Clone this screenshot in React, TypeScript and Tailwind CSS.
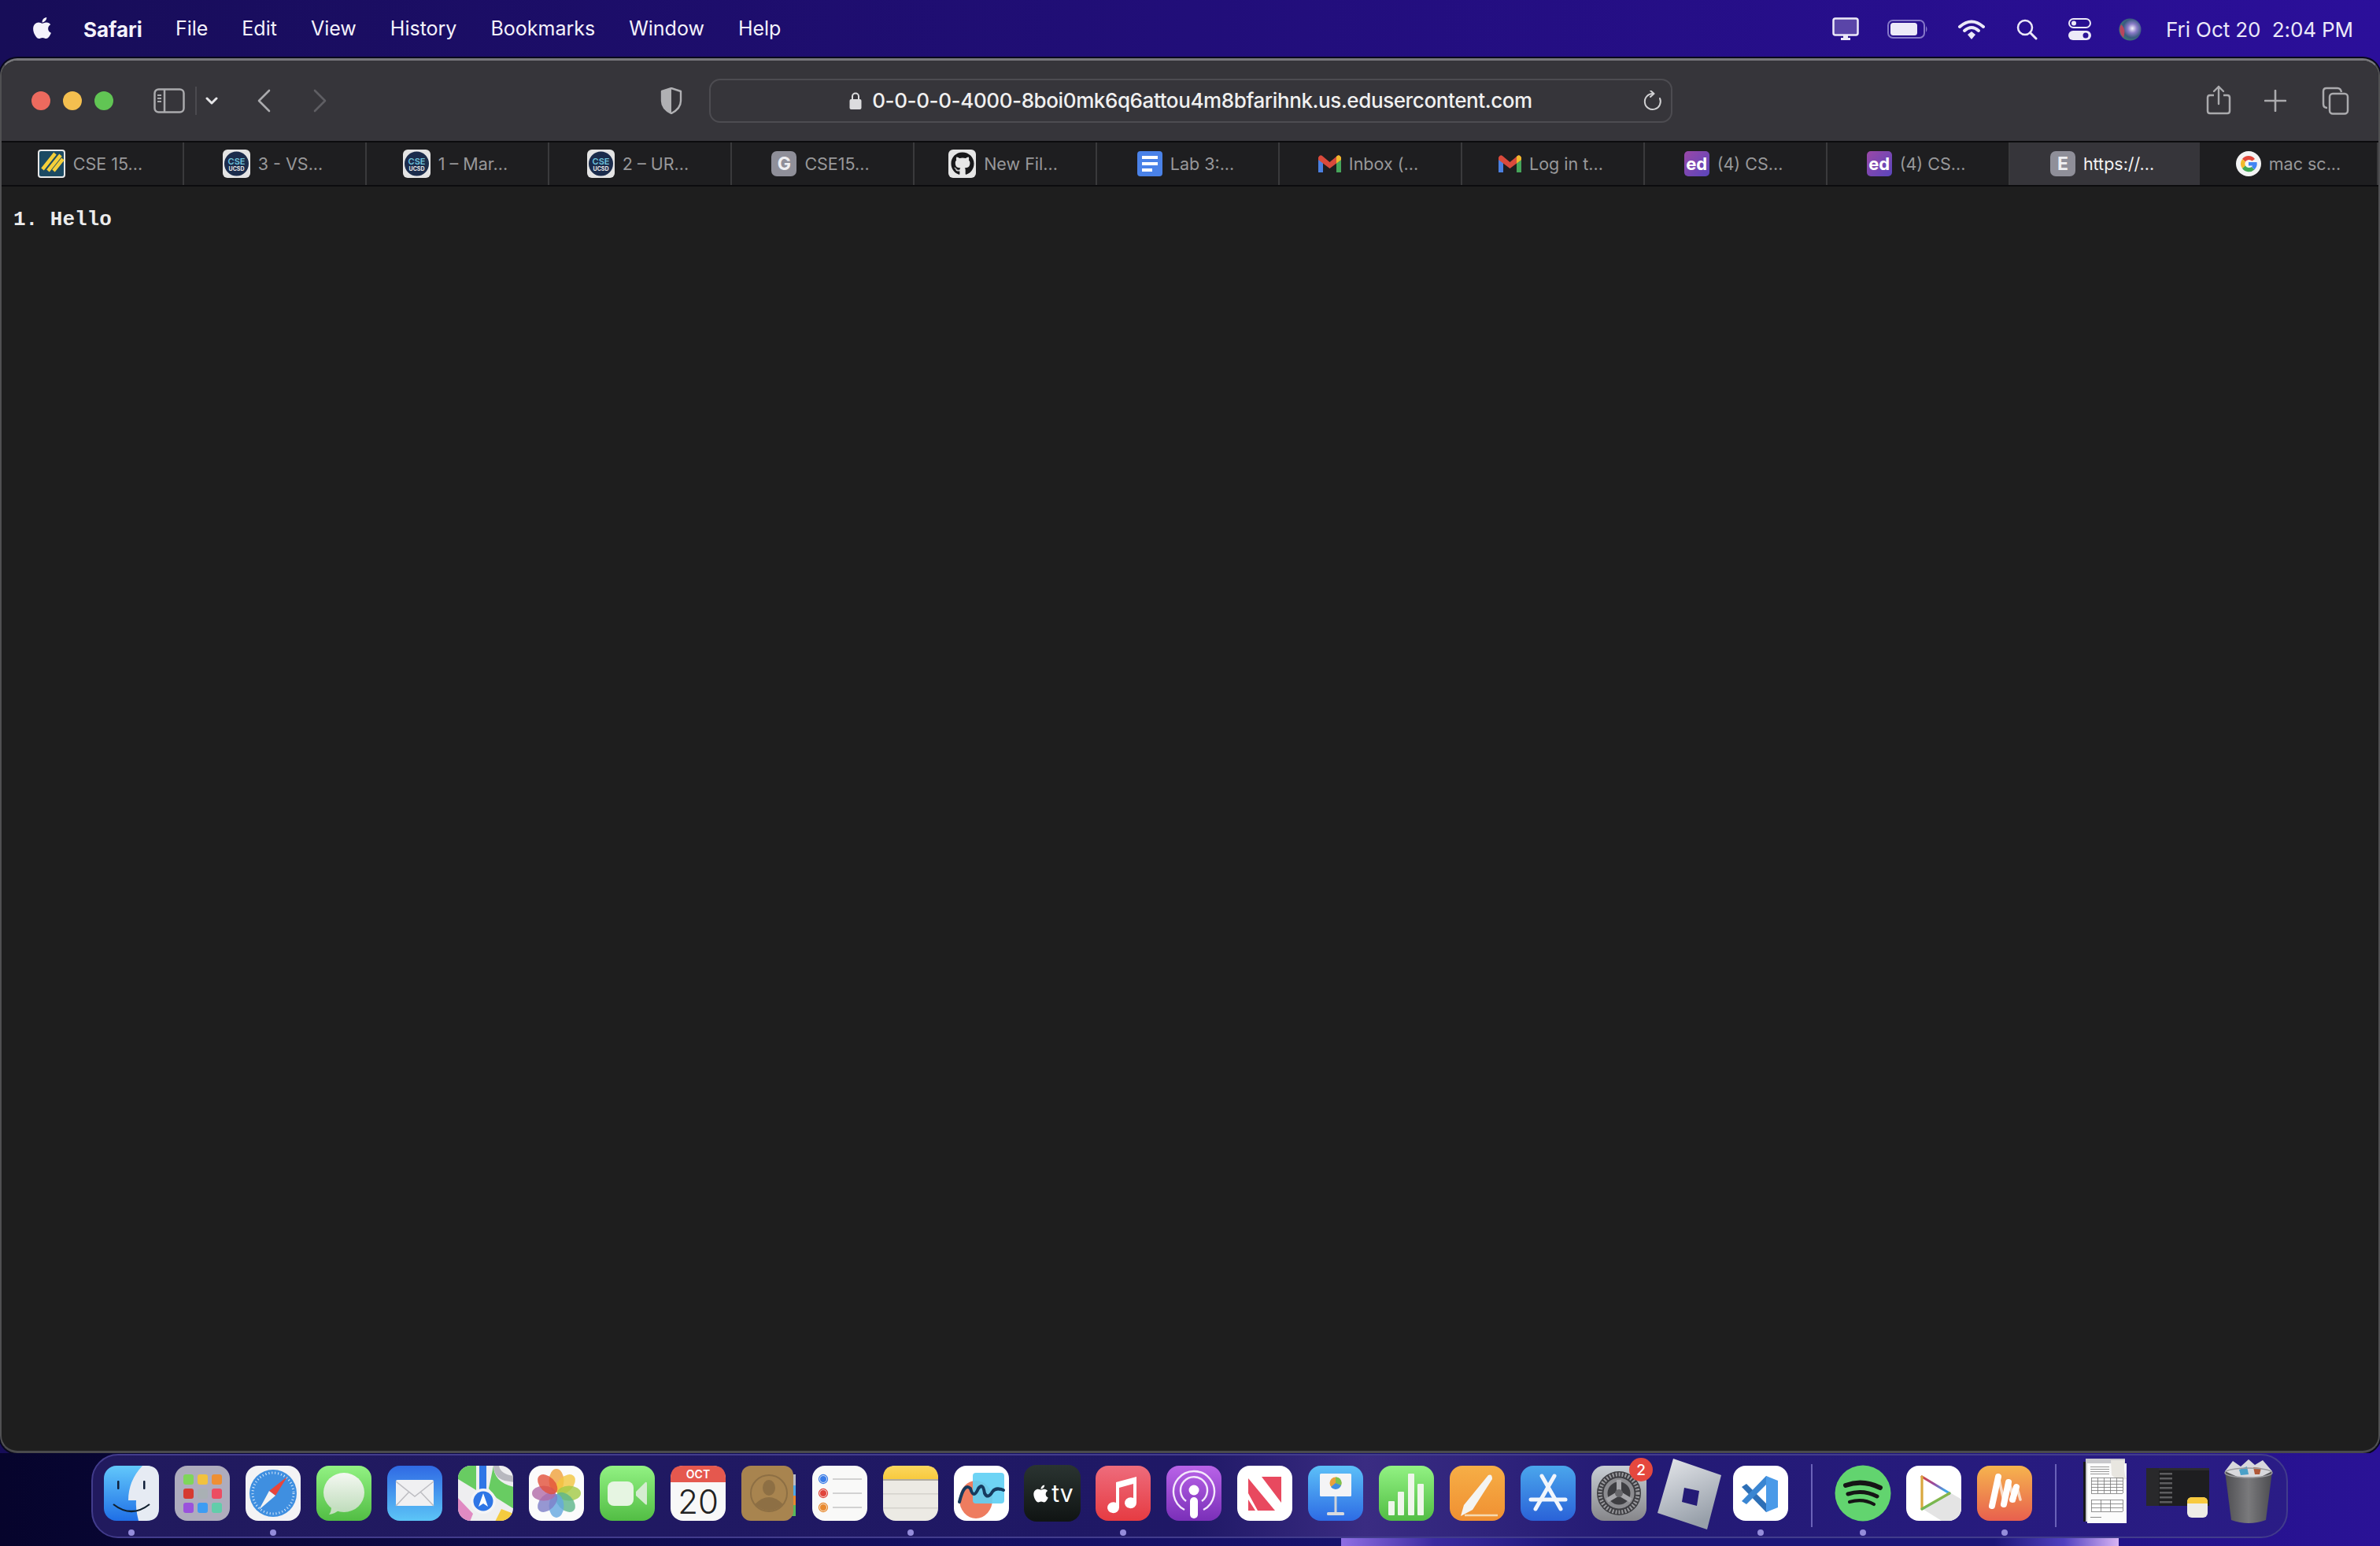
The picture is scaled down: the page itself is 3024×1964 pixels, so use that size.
import type { ReactNode } from 'react'
import { FaApple, FaGithub } from 'react-icons/fa'

const MENUS = ['File', 'Edit', 'View', 'History', 'Bookmarks', 'Window', 'Help']

const TABS: { title: string; icon: ReactNode; active?: boolean; w: string }[] = [
  { title: 'CSE 15...', icon: <GitbookFav />, w: 'w-[232px]' },
  { title: '3 - VS...', icon: <CseFav />, w: 'w-[232px]' },
  { title: '1 – Mar...', icon: <CseFav />, w: 'w-[232px]' },
  { title: '2 – UR...', icon: <CseFav />, w: 'w-[232px]' },
  { title: 'CSE15...', icon: <LetterFav letter="G" />, w: 'w-[232px]' },
  { title: 'New Fil...', icon: <GithubFav />, w: 'w-[232px]' },
  { title: 'Lab 3:...', icon: <DocsFav />, w: 'w-[232px]' },
  { title: 'Inbox (...', icon: <GmailFav />, w: 'w-[232px]' },
  { title: 'Log in t...', icon: <GmailFav />, w: 'w-[232px]' },
  { title: '(4) CS...', icon: <EdFav />, w: 'w-[232px]' },
  { title: '(4) CS...', icon: <EdFav />, w: 'w-[232px]' },
  { title: 'https://...', icon: <LetterFav letter="E" />, active: true, w: 'w-[241px]' },
  { title: 'mac sc...', icon: <GoogleFav />, w: 'flex-1' },
]

function GitbookFav() {
  return (
    <svg width="35" height="36" viewBox="0 0 35 36">
      <rect width="35" height="36" rx="4" fill="#e8e8e8" />
      <rect x="2" y="2" width="31" height="32" rx="2" fill="#1c4a63" />
      <path d="M6 25 L22 5 M13 27 L29 7 M20 27 L32 12" stroke="#f4cf3a" strokeWidth="4.5" />
    </svg>
  )
}

function CseFav() {
  return (
    <svg width="35" height="36" viewBox="0 0 35 36">
      <rect width="35" height="36" rx="6" fill="#e4e4e4" />
      <circle cx="17.5" cy="18" r="15.5" fill="#1b2c4c" />
      <text x="17.5" y="19" textAnchor="middle" fontSize="11" fontWeight="600" fill="#6fc3dc" fontFamily="Inter, sans-serif">CSE</text>
      <text x="17.5" y="27" textAnchor="middle" fontSize="7" fontWeight="700" fill="#e8e8e8" fontFamily="Inter, sans-serif">UCSD</text>
    </svg>
  )
}

function LetterFav({ letter }: { letter: string }) {
  return (
    <div className="flex h-[32px] w-[32px] items-center justify-center rounded-[7px] bg-[#8f8f99] text-[23px] font-bold leading-none text-[#efeff2]">
      {letter}
    </div>
  )
}

function GithubFav() {
  return (
    <div className="flex h-[36px] w-[35px] items-center justify-center rounded-[6px] bg-[#e6e6e6] text-[#18181a]">
      <FaGithub size={30} />
    </div>
  )
}

function DocsFav() {
  return (
    <svg width="32" height="32" viewBox="0 0 32 32">
      <rect width="32" height="32" rx="4" fill="#4a82e8" />
      <rect x="6" y="6" width="20" height="4" fill="#fff" />
      <rect x="6" y="14" width="20" height="4" fill="#fff" />
      <rect x="6" y="22" width="13" height="4" fill="#fff" />
    </svg>
  )
}

function GmailFav() {
  return (
    <svg width="29" height="22" viewBox="0 0 29 22">
      <path d="M0 3 L0 22 L6 22 L6 9 Z" fill="#4a7fe0" />
      <path d="M29 3 L29 22 L23 22 L23 9 Z" fill="#46a55a" />
      <path d="M0 3 Q2 -1 5 1 L14.5 9 L24 1 Q27 -1 29 3 L29 6 L14.5 17 L0 6 Z" fill="#d94a3c" />
      <path d="M23 2 L24 1 Q27 -1 29 3 L29 6 L23 10.5 Z" fill="#efb92c" />
    </svg>
  )
}

function EdFav() {
  return (
    <div className="flex h-[32px] w-[32px] items-center justify-center rounded-[5px] bg-[linear-gradient(135deg,#9a48a8,#5a46bc)] text-[22px] font-bold leading-none text-white">
      ed
    </div>
  )
}

function GoogleFav() {
  return (
    <svg width="32" height="32" viewBox="0 0 32 32">
      <circle cx="16" cy="16" r="16" fill="#f4f4f4" />
      <path d="M24 10 A10 10 0 0 0 8 10 L12 13.5 A5.5 5.5 0 0 1 20.5 12.5 Z" fill="#e2483b" />
      <path d="M8 10 A10.5 10.5 0 0 0 8 22 L12 18.5 A5 5 0 0 1 12 13.5 Z" fill="#f3bb2b" />
      <path d="M8 22 A10.5 10.5 0 0 0 23.5 23.5 L20 20 A5.5 5.5 0 0 1 12 18.5 Z" fill="#41a853" />
      <path d="M26.5 14 L16 14 L16 18.5 L21 18.5 Q20.5 19.5 20 20 L23.5 23.5 Q27.5 19.5 26.5 14 Z" fill="#4285f4" />
    </svg>
  )
}

function Tile({ children }: { children: ReactNode }) {
  return (
    <svg width="72" height="72" viewBox="0 0 72 72" className="block overflow-visible">
      {children}
    </svg>
  )
}

function Finder() {
  return (
    <Tile>
      <defs>
        <linearGradient id="fi" x1="0" y1="0" x2="0" y2="1"><stop offset="0" stopColor="#62c8fb" /><stop offset="1" stopColor="#1f6fe6" /></linearGradient>
      </defs>
      <rect x="1" y="1" width="70" height="70" rx="16" fill="url(#fi)" />
      <path d="M50 1 H55 Q71 1 71 17 V55 Q71 71 55 71 H45 Q41 55 42 45 H32 Q32 20 50 1 Z" fill="#e6ebf3" />
      <rect x="18" y="20" width="2.5" height="11" rx="1" fill="#10203a" />
      <rect x="51" y="20" width="2.5" height="11" rx="1" fill="#10203a" />
      <path d="M13 50 Q36 68 59 50" fill="none" stroke="#10202e" strokeWidth="2.2" />
    </Tile>
  )
}

function Launchpad() {
  const colors = ['#7fd65a', '#f2c23e', '#ee8f33', '#d63a30', '#a9b0b4', '#ec4d62', '#9a52dc', '#3d9cf2', '#62cdaa']
  return (
    <Tile>
      <rect x="1" y="1" width="70" height="70" rx="16" fill="#aeacbd" />
      {colors.map((c, i) => (
        <rect key={i} x={12 + (i % 3) * 18} y={12 + Math.floor(i / 3) * 18} width="13" height="13" rx="3" fill={c} />
      ))}
    </Tile>
  )
}

function SafariIcon() {
  return (
    <Tile>
      <rect x="1" y="1" width="70" height="70" rx="16" fill="#f3f3f5" />
      <circle cx="36" cy="36" r="30" fill="#3f8fe0" />
      <circle cx="36" cy="36" r="26" fill="none" stroke="#dcebfa" strokeWidth="3" strokeDasharray="1 3" />
      <path d="M54 15 L31 33 L39 39 Z" fill="#e8453c" />
      <path d="M18 57 L31 33 L39 39 Z" fill="#f4f4f4" />
    </Tile>
  )
}

function Messages() {
  return (
    <Tile>
      <defs>
        <linearGradient id="gr" x1="0" y1="0" x2="0" y2="1"><stop offset="0" stopColor="#92f283" /><stop offset="1" stopColor="#52bd44" /></linearGradient>
        <linearGradient id="bub" x1="0" y1="0" x2="0" y2="1"><stop offset="0" stopColor="#f4f8f2" /><stop offset="1" stopColor="#bfdcbb" /></linearGradient>
      </defs>
      <rect x="1" y="1" width="70" height="70" rx="16" fill="url(#gr)" />
      <ellipse cx="36" cy="35" rx="26" ry="25" fill="url(#bub)" />
      <path d="M20 52 Q20 60 17 63 Q25 62 30 57 Z" fill="#c5e0c0" />
    </Tile>
  )
}

function Mail() {
  return (
    <Tile>
      <defs>
        <linearGradient id="ml" x1="0" y1="0" x2="0" y2="1"><stop offset="0" stopColor="#2f69e4" /><stop offset="1" stopColor="#5cc5f7" /></linearGradient>
      </defs>
      <rect x="1" y="1" width="70" height="70" rx="16" fill="url(#ml)" />
      <rect x="12" y="19" width="48" height="33" rx="2" fill="#f0f0f2" />
      <path d="M12 21 L36 40 L60 21 M12 52 L29 34 M60 52 L43 34" fill="none" stroke="#bdbdc2" strokeWidth="1.5" />
    </Tile>
  )
}

function Maps() {
  return (
    <Tile>
      <clipPath id="mp"><rect x="1" y="1" width="70" height="70" rx="16" /></clipPath>
      <g clipPath="url(#mp)">
        <rect width="72" height="72" fill="#eeeef0" />
        <path d="M1 1 H24 V32 L1 18 Z" fill="#68cc62" />
        <path d="M46 1 Q46 22 72 28 V56 L50 42 L40 30 Z" fill="#68cc62" />
        <path d="M1 42 L20 62 L16 72 H1 Z" fill="#e08ac2" />
        <path d="M48 72 L56 56 L72 62 V72 Z" fill="#f4cb3f" />
        <rect x="28" y="0" width="9" height="36" fill="#2f76e6" />
        <path d="M46 0 Q46 16 60 20 L72 22 V14 Q54 12 53 0 Z" fill="#b8b8bf" />
      </g>
      <circle cx="33" cy="46" r="16" fill="#f4f4f6" />
      <circle cx="33" cy="46" r="12.5" fill="#2f76e6" />
      <path d="M33 36 L39 53 L33 49 L27 53 Z" fill="#fff" />
    </Tile>
  )
}

function Photos() {
  const petals = ['#f0a13c', '#f2c53e', '#a3c945', '#5cb58a', '#64a8e0', '#7d7ec8', '#b16aa8', '#e2503a']
  return (
    <Tile>
      <rect x="1" y="1" width="70" height="70" rx="16" fill="#fbfbfb" />
      {petals.map((c, i) => (
        <ellipse key={i} cx="36" cy="20" rx="9.5" ry="15" fill={c} opacity="0.8" transform={`rotate(${i * 45} 36 36)`} />
      ))}
    </Tile>
  )
}

function FaceTime() {
  return (
    <Tile>
      <rect x="1" y="1" width="70" height="70" rx="16" fill="url(#gr)" />
      <rect x="11" y="21" width="33" height="31" rx="8" fill="#e6f5e2" />
      <path d="M47 34 L59 22 Q61 21 61 24 V49 Q61 52 59 50 L47 39 Z" fill="#d4ecd0" />
    </Tile>
  )
}

function Calendar() {
  return (
    <Tile>
      <rect x="1" y="1" width="70" height="70" rx="16" fill="#f8f8f8" />
      <path d="M1 22 V17 Q1 1 17 1 H55 Q71 1 71 17 V22 Z" fill="#e5584e" />
      <text x="36" y="17" textAnchor="middle" fontSize="14" fontWeight="600" fill="#fff" fontFamily="Inter, sans-serif">OCT</text>
      <text x="36" y="62" textAnchor="middle" fontSize="42" fontWeight="300" fill="#222" fontFamily="Inter, sans-serif">20</text>
    </Tile>
  )
}

function Contacts() {
  return (
    <Tile>
      <rect x="60" y="12" width="10" height="14" fill="#bdbdc4" />
      <rect x="60" y="26" width="10" height="13" fill="#4fa8e8" />
      <rect x="60" y="39" width="10" height="12" fill="#e8892e" />
      <rect x="60" y="51" width="10" height="14" fill="#58b85a" />
      <rect x="1" y="1" width="66" height="70" rx="12" fill="#a8844f" />
      <circle cx="36" cy="36" r="23" fill="none" stroke="#8d6f44" strokeWidth="2" />
      <ellipse cx="36" cy="29" rx="8" ry="10" fill="#8d6f44" />
      <path d="M18 50 Q36 32 54 50 Q36 66 18 50 Z" fill="#8d6f44" />
    </Tile>
  )
}

function Reminders() {
  const rows: [number, string][] = [[18, '#3b7de8'], [36, '#e0453c'], [54, '#e8892e']]
  return (
    <Tile>
      <rect x="1" y="1" width="70" height="70" rx="16" fill="#f9f9f8" />
      {rows.map(([y, c]) => (
        <g key={y}>
          <circle cx="15" cy={y} r="5.5" fill="none" stroke={c} strokeWidth="1.3" />
          <circle cx="15" cy={y} r="4" fill={c} />
          <rect x="27" y={y - 0.8} width="37" height="1.6" fill="#c9c9c9" />
        </g>
      ))}
    </Tile>
  )
}

function NotesTile() {
  return (
    <Tile>
      <defs>
        <linearGradient id="ny" x1="0" y1="0" x2="0" y2="1"><stop offset="0" stopColor="#fbd75e" /><stop offset="1" stopColor="#f8c93c" /></linearGradient>
      </defs>
      <rect x="1" y="1" width="70" height="70" rx="16" fill="#eceae4" />
      <path d="M1 19 V17 Q1 1 17 1 H55 Q71 1 71 17 V19 Z" fill="url(#ny)" />
      <rect x="1" y="18" width="70" height="2" fill="#b0aca0" />
      <rect x="1" y="36" width="70" height="1.5" fill="#d4d2cc" />
      <rect x="1" y="54" width="70" height="1.5" fill="#d4d2cc" />
    </Tile>
  )
}

function Freeform() {
  return (
    <Tile>
      <rect x="1" y="1" width="70" height="70" rx="16" fill="#fff" />
      <ellipse cx="29" cy="44" rx="21" ry="24" fill="#ee7c5f" />
      <rect x="25" y="10" width="40" height="39" rx="4" fill="#62d0f4" opacity="0.92" />
      <path d="M8 47 Q14 22 22 30 Q26 44 32 30 Q38 22 40 36 Q44 44 50 34 Q54 28 64 32" fill="none" stroke="#153a5e" strokeWidth="4" strokeLinecap="round" />
    </Tile>
  )
}

function AppleTv() {
  return (
    <div className="relative flex h-[72px] w-[72px] items-center justify-center gap-[1px] rounded-[16px] bg-[linear-gradient(180deg,#2a3431,#101413)] text-white">
      <FaApple size={25} />
      <span className="text-[30px] font-normal leading-none [font-family:Inter,sans-serif]">tv</span>
    </div>
  )
}

function Music() {
  return (
    <Tile>
      <defs>
        <linearGradient id="mu" x1="0" y1="0" x2="0" y2="1"><stop offset="0" stopColor="#ee6c7c" /><stop offset="1" stopColor="#e63b42" /></linearGradient>
      </defs>
      <rect x="1" y="1" width="70" height="70" rx="16" fill="url(#mu)" />
      <path d="M27 22 L53 15 V48 A7.5 7 0 1 1 49 42 V24 L31 29 V54 A7.5 7 0 1 1 27 48 Z" fill="#fff" />
    </Tile>
  )
}

function Podcasts() {
  return (
    <Tile>
      <defs>
        <linearGradient id="po" x1="0" y1="0" x2="0" y2="1"><stop offset="0" stopColor="#b963e8" /><stop offset="1" stopColor="#7a2fb8" /></linearGradient>
      </defs>
      <rect x="1" y="1" width="70" height="70" rx="16" fill="url(#po)" />
      <path d="M24 57 A26 26 0 1 1 48 57" fill="none" stroke="#f4e8fb" strokeWidth="2.4" />
      <path d="M26 46 A17 17 0 1 1 46 46" fill="none" stroke="#f4e8fb" strokeWidth="2.4" />
      <circle cx="36" cy="32" r="6.5" fill="#fff" />
      <rect x="31" y="41" width="10" height="27" rx="5" fill="#fff" />
    </Tile>
  )
}

function News() {
  return (
    <Tile>
      <rect x="1" y="1" width="70" height="70" rx="16" fill="#fff" />
      <path d="M15 15 H23 L57 58 H27 L15 36 Z M15 44 L24 58 H15 Z" fill="#e8495f" />
      <path d="M15 15 H25 L57 57 V58 H49 L15 17 Z" fill="#fff" />
      <path d="M32 15 H57 V48 Z" fill="#e8495f" />
    </Tile>
  )
}

function Keynote() {
  return (
    <Tile>
      <defs>
        <linearGradient id="ke" x1="0" y1="0" x2="0" y2="1"><stop offset="0" stopColor="#5cc0f8" /><stop offset="1" stopColor="#2d6be4" /></linearGradient>
      </defs>
      <rect x="1" y="1" width="70" height="70" rx="16" fill="url(#ke)" />
      <rect x="16" y="11" width="40" height="29" rx="1.5" fill="#f4f4f6" />
      <circle cx="36" cy="23" r="7.5" fill="#e8a23c" />
      <path d="M36 23 L36 15.5 A7.5 7.5 0 0 1 43 26 Z" fill="#7cc24e" />
      <path d="M36 23 L43 26 A7.5 7.5 0 0 1 30 28 Z" fill="#3f8fe0" />
      <rect x="34.5" y="40" width="3" height="23" fill="#d0d4da" />
      <rect x="25" y="60" width="22" height="4" rx="1.5" fill="#d8dade" />
    </Tile>
  )
}

function Numbers() {
  return (
    <Tile>
      <rect x="1" y="1" width="70" height="70" rx="16" fill="url(#gr)" />
      <rect x="13" y="46" width="8" height="18" rx="1" fill="#eef6ea" />
      <rect x="25" y="34" width="8" height="30" rx="1" fill="#eef6ea" />
      <rect x="38" y="11" width="8" height="53" rx="1" fill="#eef6ea" />
      <rect x="50" y="24" width="8" height="40" rx="1" fill="#eef6ea" />
    </Tile>
  )
}

function Pages() {
  return (
    <Tile>
      <defs>
        <linearGradient id="pa" x1="0" y1="0" x2="0" y2="1"><stop offset="0" stopColor="#f6ae46" /><stop offset="1" stopColor="#f09032" /></linearGradient>
      </defs>
      <rect x="1" y="1" width="70" height="70" rx="16" fill="url(#pa)" />
      <path d="M50 13 Q55 11 55 18 L30 57 L15 65 L19 51 Z" fill="#f4f4f2" />
      <path d="M20 64 H62" stroke="#f6d9b0" strokeWidth="2.4" />
    </Tile>
  )
}

function AppStore() {
  return (
    <Tile>
      <defs>
        <linearGradient id="as" x1="0" y1="0" x2="0" y2="1"><stop offset="0" stopColor="#4aa6ec" /><stop offset="1" stopColor="#2a62d8" /></linearGradient>
      </defs>
      <rect x="1" y="1" width="70" height="70" rx="16" fill="url(#as)" />
      <path d="M28 14 L52 56 M44 14 L20 56" stroke="#f2f6fc" strokeWidth="5" strokeLinecap="round" />
      <path d="M14 44 H58" stroke="#f2f6fc" strokeWidth="5" strokeLinecap="round" />
    </Tile>
  )
}

function Settings() {
  return (
    <Tile>
      <defs>
        <linearGradient id="sp" x1="0" y1="0" x2="0" y2="1"><stop offset="0" stopColor="#c8ced4" /><stop offset="1" stopColor="#86868a" /></linearGradient>
      </defs>
      <rect x="1" y="1" width="70" height="70" rx="16" fill="url(#sp)" />
      <circle cx="36" cy="36" r="28" fill="#3e3e42" />
      <circle cx="36" cy="36" r="24" fill="none" stroke="#9a9a9e" strokeWidth="5" strokeDasharray="2 2" />
      <circle cx="36" cy="36" r="17" fill="none" stroke="#8c8c90" strokeWidth="5" />
      <path d="M36 36 L36 19 M36 36 L21 45 M36 36 L51 45" stroke="#a6a6aa" strokeWidth="6" />
      <circle cx="36" cy="36" r="5" fill="#68686c" />
    </Tile>
  )
}

function Roblox() {
  return (
    <Tile>
      <defs>
        <linearGradient id="rb" x1="0" y1="0" x2="0.4" y2="1"><stop offset="0" stopColor="#e6e8ec" /><stop offset="1" stopColor="#98a0aa" /></linearGradient>
      </defs>
      <path fillRule="evenodd" d="M15 -8 L76 13 L58 82 L-5 61 Z M29 29 L26 47 L45 52 L48 33 Z" fill="url(#rb)" />
    </Tile>
  )
}

function VsCode() {
  return (
    <Tile>
      <rect x="1" y="1" width="70" height="70" rx="16" fill="#fff" />
      <path d="M12 28 L18 24 L50 56 L43 60 Z" fill="#2d6fb6" />
      <path d="M12 46 L18 50 L50 18 L43 14 Z" fill="#3a86d2" />
      <path d="M43 14 L58 20 V54 L43 60 Z" fill="#4a9ae8" />
    </Tile>
  )
}

function Spotify() {
  return (
    <Tile>
      <circle cx="36" cy="36" r="35.5" fill="#62d46f" />
      <path d="M14 26 Q36 18 58 29" fill="none" stroke="#151515" strokeWidth="6" strokeLinecap="round" />
      <path d="M17 37 Q36 31 54 40" fill="none" stroke="#151515" strokeWidth="5" strokeLinecap="round" />
      <path d="M19 47 Q36 42 50 50" fill="none" stroke="#151515" strokeWidth="4.2" strokeLinecap="round" />
    </Tile>
  )
}

function PlayTile() {
  return (
    <Tile>
      <defs>
        <linearGradient id="pl" x1="0" y1="0" x2="1" y2="0.6"><stop offset="0" stopColor="#d2463c" /><stop offset="0.5" stopColor="#9a4aa0" /><stop offset="1" stopColor="#3fa8e8" /></linearGradient>
        <linearGradient id="pl2" x1="0" y1="0" x2="0.8" y2="1"><stop offset="0" stopColor="#e8a73a" /><stop offset="0.6" stopColor="#72b850" /><stop offset="1" stopColor="#4ab0c8" /></linearGradient>
      </defs>
      <clipPath id="plc"><rect x="1" y="1" width="70" height="70" rx="16" /></clipPath>
      <rect x="1" y="1" width="70" height="70" rx="16" fill="#fff" />
      <path d="M58 36 L72 44 V71 H46 L22 56 Z" fill="#e4e4e4" clipPath="url(#plc)" />
      <path d="M21 15 L56 36" stroke="url(#pl)" strokeWidth="3.2" strokeLinecap="round" />
      <path d="M21 15 V56" stroke="#d9a83e" strokeWidth="3.2" strokeLinecap="round" />
      <path d="M21 56 L56 36" stroke="url(#pl2)" strokeWidth="3.2" strokeLinecap="round" />
    </Tile>
  )
}

function Muse() {
  return (
    <Tile>
      <defs>
        <linearGradient id="mz" x1="0" y1="0" x2="0" y2="1"><stop offset="0" stopColor="#f6b44e" /><stop offset="1" stopColor="#e8604e" /></linearGradient>
      </defs>
      <rect x="1" y="1" width="70" height="70" rx="16" fill="url(#mz)" />
      <path d="M18 53 L28 14 L36 50 L42 22 L48 46 L52 29 L56 44" fill="none" stroke="#f8dcc8" strokeWidth="3.5" strokeLinecap="round" strokeLinejoin="round" />
      <path d="M20 52 L28 15 M35 50 L41 22 M46 44 L51 28" fill="none" stroke="#fff" strokeWidth="8" strokeLinecap="round" />
    </Tile>
  )
}

function DocStack() {
  const rows = [30, 34, 38, 42, 46, 50]
  return (
    <Tile>
      <g transform="translate(3 0)">
        <rect x="6" y="-8" width="50" height="80" fill="#c8c8cc" />
        <rect x="3" y="-4" width="3" height="76" fill="#18181a" />
        <rect x="8" y="-2" width="50" height="76" fill="#fbfbfb" />
        <path d="M38 -6 H56 Q53 8 58 18 Q46 20 39 13 Z" fill="#e8e6e0" />
        {[2, 5, 8, 11].map((y) => (
          <rect key={y} x="12" y={y} width="24" height="1" fill="#9a9a9a" />
        ))}
        {rows.map((y) => (
          <rect key={y} x="13" y={y - 14} width="40" height="0.8" fill="#7a7a7a" />
        ))}
        {[13, 21, 29, 37, 45, 53].map((x) => (
          <rect key={x} x={x} y="16" width="0.8" height="20" fill="#7a7a7a" />
        ))}
        {[44, 49, 54, 59].map((y) => (
          <rect key={y} x="13" y={y} width="40" height="0.8" fill="#7a7a7a" />
        ))}
        {[13, 25, 37, 53].map((x) => (
          <rect key={x} x={x} y="44" width="0.8" height="15" fill="#7a7a7a" />
        ))}
        <rect x="12" y="66" width="14" height="1" fill="#8a8a8a" />
      </g>
    </Tile>
  )
}

function ThumbStack() {
  const rows = [8, 14, 20, 26, 32, 38, 44]
  return (
    <Tile>
      <rect x="-4" y="4" width="80" height="48" fill="#1e1e20" />
      <rect x="-4" y="4" width="80" height="3" fill="#2c2c2e" />
      <rect x="-4" y="4" width="16" height="48" fill="#29292b" />
      {rows.map((y) => (
        <rect key={y} x="13" y={y + 2} width="16" height="2.5" fill="#77777a" opacity="0.7" />
      ))}
      <rect x="48" y="41" width="26" height="26" rx="6" fill="#eeece6" />
      <path d="M48 49 V47 Q48 41 54 41 H68 Q74 41 74 47 V49 Z" fill="#f8ca3e" />
    </Tile>
  )
}

function Trash() {
  return (
    <Tile>
      <defs>
        <linearGradient id="tr" x1="0" y1="0" x2="1" y2="0"><stop offset="0" stopColor="#4e4e52" /><stop offset="0.5" stopColor="#7a7a7c" /><stop offset="1" stopColor="#4c4c50" /></linearGradient>
      </defs>
      <path d="M6 8 L66 8 L58 70 Q36 78 14 70 Z" fill="url(#tr)" />
      <path d="M6 8 L16 -5 L26 2 L36 -7 L44 0 L54 -6 L66 8 L50 16 L24 16 Z" fill="#d8d8dc" />
      <path d="M24 6 L34 2 L36 12 L26 13 Z" fill="#4aa0c8" />
      <path d="M42 3 L52 4 L50 12 L44 12 Z" fill="#b05838" />
      <ellipse cx="36" cy="10" rx="30" ry="6" fill="none" stroke="#9a9a9e" strokeWidth="1.5" />
    </Tile>
  )
}

const DOCK_MAIN: { el: ReactNode; dot?: boolean; badge?: string }[] = [
  { el: <Finder />, dot: true },
  { el: <Launchpad /> },
  { el: <SafariIcon />, dot: true },
  { el: <Messages /> },
  { el: <Mail /> },
  { el: <Maps /> },
  { el: <Photos /> },
  { el: <FaceTime /> },
  { el: <Calendar /> },
  { el: <Contacts /> },
  { el: <Reminders /> },
  { el: <NotesTile />, dot: true },
  { el: <Freeform /> },
  { el: <AppleTv /> },
  { el: <Music />, dot: true },
  { el: <Podcasts /> },
  { el: <News /> },
  { el: <Keynote /> },
  { el: <Numbers /> },
  { el: <Pages /> },
  { el: <AppStore /> },
  { el: <Settings />, badge: '2' },
  { el: <Roblox /> },
  { el: <VsCode />, dot: true },
]

const DOCK_RECENT: { el: ReactNode; dot?: boolean }[] = [
  { el: <Spotify />, dot: true },
  { el: <PlayTile /> },
  { el: <Muse />, dot: true },
]

const DOCK_FILES: { el: ReactNode }[] = [{ el: <DocStack /> }, { el: <ThumbStack /> }, { el: <Trash /> }]

function DockItem({ el, dot, badge }: { el: ReactNode; dot?: boolean; badge?: string }) {
  return (
    <div className="relative flex w-[72px] flex-col items-center">
      {el}
      <div className={`mt-[10px] h-[8px] w-[8px] rounded-full ${dot ? 'bg-[#958ddb]' : 'bg-transparent'}`} />
      {badge && (
        <div className="absolute -right-[7px] -top-[9px] flex h-[30px] w-[30px] items-center justify-center rounded-full bg-[#e5483e] text-[19px] font-medium leading-none text-white">
          {badge}
        </div>
      )}
    </div>
  )
}

function DockDivider() {
  return <div className="mx-[28px] mt-[-1px] h-[80px] w-[2px] bg-[#6a62b8]" />
}

export default function App() {
  return (
    <div className="relative flex h-[1964px] w-[3024px] flex-col overflow-hidden bg-[linear-gradient(90deg,#170d58,#2b0f9a)] [font-family:Inter,sans-serif]">
      {/* Menu bar */}
      <header className="flex h-[74px] shrink-0 items-center pl-[38px] pr-[34px] text-[25px] text-[#f4f2fb]">
        <FaApple size={31} className="mr-[37px] -translate-y-[2px]" />
        <span className="mr-[42px] text-[26px] font-bold">Safari</span>
        <nav className="flex gap-[43px]">
          {MENUS.map((m) => (
            <span key={m}>{m}</span>
          ))}
        </nav>
        <div className="ml-auto flex items-center text-[#ece9f8]">
          <svg width="34" height="30" viewBox="0 0 34 30" className="mr-[36px]">
            <rect x="1.5" y="1.5" width="31" height="21" rx="2.5" fill="#5a45a8" stroke="#ece9f8" strokeWidth="2.5" />
            <path d="M11 29 H23 V26 H20 V23 H14 V26 H11 Z" fill="#ece9f8" />
          </svg>
          <svg width="52" height="24" viewBox="0 0 52 24" className="mr-[37px]">
            <rect x="1" y="1" width="46" height="22" rx="6" fill="none" stroke="#8577c8" strokeWidth="2" />
            <rect x="4" y="4" width="34" height="16" rx="3.5" fill="#ece9f8" />
            <path d="M49 8 Q52 12 49 16 Z" fill="#8577c8" />
          </svg>
          <svg width="36" height="27" viewBox="0 0 36 27" className="mr-[39px]">
            <path d="M3 10 Q18 -3 33 10" fill="none" stroke="#ece9f8" strokeWidth="4" strokeLinecap="round" />
            <path d="M9 15 Q18 7 27 15" fill="none" stroke="#ece9f8" strokeWidth="4" strokeLinecap="round" />
            <path d="M13 20 L18 16 L23 20 L18 26 Z" fill="#ece9f8" />
          </svg>
          <svg width="27" height="27" viewBox="0 0 27 27" className="mr-[39px]">
            <circle cx="11" cy="11" r="9" fill="none" stroke="#ece9f8" strokeWidth="2.5" />
            <path d="M17.5 17.5 L25 25" stroke="#ece9f8" strokeWidth="3" strokeLinecap="round" />
          </svg>
          <svg width="29" height="28" viewBox="0 0 29 28" className="mr-[35px]">
            <rect x="1" y="1" width="27" height="11" rx="5.5" fill="none" stroke="#ece9f8" strokeWidth="2" />
            <circle cx="7" cy="6.5" r="3" fill="#ece9f8" />
            <rect x="0" y="16" width="29" height="12" rx="6" fill="#ece9f8" />
            <circle cx="22" cy="22" r="3.5" fill="#2b1296" />
          </svg>
          <svg width="29" height="29" viewBox="0 0 29 29" className="mr-[31px]">
            <defs>
              <radialGradient id="si" cx="0.6" cy="0.45" r="0.6">
                <stop offset="0" stopColor="#f4f4fa" />
                <stop offset="0.35" stopColor="#8a7cc8" />
                <stop offset="0.7" stopColor="#3a5a80" />
                <stop offset="1" stopColor="#3c7a72" />
              </radialGradient>
            </defs>
            <circle cx="14.5" cy="14.5" r="14" fill="url(#si)" />
            <path d="M3 8 A14 14 0 0 0 6 25 Q10 14 3 8 Z" fill="#b8455e" />
          </svg>
          <span className="whitespace-pre text-[26px] tracking-[-0.1px]">Fri Oct 20  2:04 PM</span>
        </div>
      </header>

      {/* Safari window */}
      <main className="flex h-[1772px] shrink-0 flex-col overflow-hidden rounded-[22px] border-x-2 border-b-[3px] border-t-[3px] border-x-[#505052] border-b-[#4a4a4c] border-t-[#77777b] bg-[#1e1e1e] shadow-[0_0_0_2px_#08081c]">
        <div className="flex h-[102px] shrink-0 items-center bg-[#36353a]">
          <div className="flex w-[899px] shrink-0 items-center">
            <div className="ml-[38px] h-[24px] w-[24px] rounded-full bg-[#ec6a5e]" />
            <div className="ml-[16px] h-[24px] w-[24px] rounded-full bg-[#f4bf4f]" />
            <div className="ml-[16px] h-[24px] w-[24px] rounded-full bg-[#61c554]" />
            <svg width="40" height="32" viewBox="0 0 40 32" className="ml-[51px]">
              <rect x="1.5" y="1.5" width="37" height="29" rx="5" fill="none" stroke="#aaaaad" strokeWidth="2.5" />
              <path d="M14 2 V30" stroke="#aaaaad" strokeWidth="2.5" />
              <path d="M5 9 H10 M5 13 H10 M5 17 H10" stroke="#aaaaad" strokeWidth="2" />
            </svg>
            <div className="ml-[13px] h-[36px] w-[2px] bg-[#4b4a4f]" />
            <svg width="16" height="10" viewBox="0 0 16 10" className="ml-[11px]">
              <path d="M2 2 L8 8 L14 2" fill="none" stroke="#e6e6e8" strokeWidth="3" strokeLinecap="round" strokeLinejoin="round" />
            </svg>
            <svg width="18" height="30" viewBox="0 0 18 30" className="ml-[49px]">
              <path d="M16 2 L3 15 L16 28" fill="none" stroke="#aaaaad" strokeWidth="2.6" strokeLinecap="round" strokeLinejoin="round" />
            </svg>
            <svg width="18" height="30" viewBox="0 0 18 30" className="ml-[54px]">
              <path d="M2 2 L15 15 L2 28" fill="none" stroke="#5f5e63" strokeWidth="2.6" strokeLinecap="round" strokeLinejoin="round" />
            </svg>
            <svg width="28" height="34" viewBox="0 0 28 34" className="ml-[423px]">
              <path d="M14 1 L26 5 V17 Q26 27 14 33 Q2 27 2 17 V5 Z" fill="#36353a" stroke="#b0b0b3" strokeWidth="2.4" strokeLinejoin="round" />
              <path d="M14 1 L2 5 V17 Q2 27 14 33 Z" fill="#b0b0b3" />
            </svg>
          </div>
          <div className="relative flex h-[56px] w-[1224px] shrink-0 items-center justify-center rounded-[14px] border-2 border-[#4d4c51] text-[26px] font-medium tracking-[-0.4px] text-[#f0f0f0]">
            <svg width="16" height="24" viewBox="0 0 16 24" className="mr-[13px]">
              <path d="M4 11 V6.5 A4 4 0 0 1 12 6.5 V11" fill="none" stroke="#dcdcde" strokeWidth="2" />
              <rect x="0.5" y="10" width="15" height="13" rx="2" fill="#dcdcde" />
            </svg>
            <span className="leading-none">0-0-0-0-4000-8boi0mk6q6attou4m8bfarihnk.us.edusercontent.com</span>
            <svg width="24" height="26" viewBox="0 0 24 26" className="absolute right-[11px] top-[13px]">
              <path d="M12 4 A10 10 0 1 0 21 10" fill="none" stroke="#d0d0d2" strokeWidth="2" strokeLinecap="round" />
              <path d="M9 0 L13.5 4 L9 8" fill="none" stroke="#d0d0d2" strokeWidth="2" strokeLinecap="round" strokeLinejoin="round" />
            </svg>
          </div>
          <div className="flex flex-1 items-center">
            <svg width="32" height="38" viewBox="0 0 32 38" className="ml-[678px] -translate-y-[1px]">
              <path d="M10 13 H5 Q2 13 2 16 V33 Q2 36 5 36 H27 Q30 36 30 33 V16 Q30 13 27 13 H22" fill="none" stroke="#aaaaad" strokeWidth="2.5" />
              <path d="M16 24 V2 M10 8 L16 2 L22 8" fill="none" stroke="#aaaaad" strokeWidth="2.4" strokeLinecap="round" strokeLinejoin="round" />
            </svg>
            <svg width="28" height="28" viewBox="0 0 28 28" className="ml-[42px]">
              <path d="M14 1 V27 M1 14 H27" stroke="#aaaaad" strokeWidth="2.6" strokeLinecap="round" />
            </svg>
            <svg width="35" height="36" viewBox="0 0 35 36" className="ml-[45px]">
              <path d="M7 27 Q2 27 2 22 V6 Q2 2 6 2 H20 Q24 2 25 7" fill="none" stroke="#aaaaad" strokeWidth="2.5" />
              <rect x="10" y="9" width="23" height="25.5" rx="4" fill="none" stroke="#aaaaad" strokeWidth="2.5" />
            </svg>
          </div>
        </div>

        {/* Tab strip */}
        <div className="flex h-[58px] shrink-0 border-y-2 border-[#0c0c0e] bg-[#1e1e20]">
          {TABS.map((tab, i) => (
            <div
              key={i}
              className={`flex ${tab.w} h-full items-center justify-center gap-[10px] border-r-2 text-[21.5px] ${tab.active ? 'border-[#36353a] bg-[#36353a] text-[#f2f2f2]' : 'border-[#3a3a3c] text-[#98989a]'} ${i === TABS.length - 1 ? 'border-r-0' : 'pr-[5px]'}`}
            >
              {tab.icon}
              <span className="whitespace-nowrap">{tab.title}</span>
            </div>
          ))}
        </div>

        <div className="flex-1 pl-[15px] pt-[26px] text-[26px] font-bold leading-[32px] text-[#ececec] [font-family:'Liberation_Mono',monospace]">
          1. Hello
        </div>
      </main>

      {/* Dock */}
      <div className="relative flex flex-1 items-start pl-[116px] pt-[1px] bg-[linear-gradient(90deg,#06042c,#141062_40%,#1a1478_75%,#2a1296)]">
        <div className="absolute bottom-0 right-[332px] h-[12px] w-[988px] bg-[linear-gradient(90deg,#8f6fe4,#3a2aa0_12%,#1c1678_30%,#1c1678_84%,#5040c0_93%,#d8b4f4)]" />
        <div className="relative flex h-[107px] w-[2791px] items-start rounded-[34px] border-2 border-[#423c8c] bg-[linear-gradient(90deg,#211a5e,#1f1866_50%,#3a2c82_58%,#231a74_70%,#2a1c86)] pl-[13px] pt-[12px]">
          <div className="flex gap-[18px]">
            {DOCK_MAIN.map((d, i) => (
              <DockItem key={i} {...d} />
            ))}
          </div>
          <DockDivider />
          <div className="flex gap-[18px]">
            {DOCK_RECENT.map((d, i) => (
              <DockItem key={i} {...d} />
            ))}
          </div>
          <DockDivider />
          <div className="flex gap-[18px]">
            {DOCK_FILES.map((d, i) => (
              <DockItem key={i} {...d} />
            ))}
          </div>
        </div>
      </div>
    </div>
  )
}
